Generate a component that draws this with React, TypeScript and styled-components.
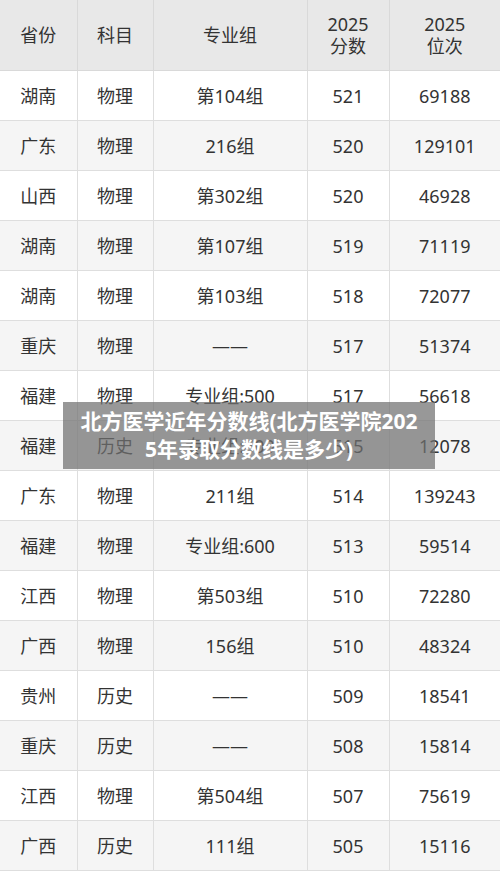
import { styled, createGlobalStyle } from "styled-components";

const GlobalStyle = createGlobalStyle`
  html, body {
    margin: 0;
    padding: 0;
    background: #fff;
  }
  body {
    font-family: "Noto Sans", "Noto Sans CJK SC", sans-serif;
  }
`;

type Row = {
  province: string;
  subject: string;
  group: string;
  score: string;
  rank: string;
};

const rows: Row[] = [
  { province: "湖南", subject: "物理", group: "第104组", score: "521", rank: "69188" },
  { province: "广东", subject: "物理", group: "216组", score: "520", rank: "129101" },
  { province: "山西", subject: "物理", group: "第302组", score: "520", rank: "46928" },
  { province: "湖南", subject: "物理", group: "第107组", score: "519", rank: "71119" },
  { province: "湖南", subject: "物理", group: "第103组", score: "518", rank: "72077" },
  { province: "重庆", subject: "物理", group: "——", score: "517", rank: "51374" },
  { province: "福建", subject: "物理", group: "专业组:500", score: "517", rank: "56618" },
  { province: "福建", subject: "历史", group: "专业组:600", score: "515", rank: "12078" },
  { province: "广东", subject: "物理", group: "211组", score: "514", rank: "139243" },
  { province: "福建", subject: "物理", group: "专业组:600", score: "513", rank: "59514" },
  { province: "江西", subject: "物理", group: "第503组", score: "510", rank: "72280" },
  { province: "广西", subject: "物理", group: "156组", score: "510", rank: "48324" },
  { province: "贵州", subject: "历史", group: "——", score: "509", rank: "18541" },
  { province: "重庆", subject: "历史", group: "——", score: "508", rank: "15814" },
  { province: "江西", subject: "物理", group: "第504组", score: "507", rank: "75619" },
  { province: "广西", subject: "历史", group: "111组", score: "505", rank: "15116" },
];

const App = () => {
  return (
    <Page>
      <GlobalStyle />
      <Table>
        <colgroup>
          <col style={{ width: 77 }} />
          <col style={{ width: 76 }} />
          <col style={{ width: 154 }} />
          <col style={{ width: 82 }} />
          <col />
        </colgroup>
        <thead>
          <tr>
            <HeadCell>省份</HeadCell>
            <HeadCell>科目</HeadCell>
            <HeadCell>专业组</HeadCell>
            <HeadCell>
              2025
              <br />
              分数
            </HeadCell>
            <HeadCell>
              2025
              <br />
              位次
            </HeadCell>
          </tr>
        </thead>
        <tbody>
          {rows.map((r, i) => (
            <BodyRow key={i} $striped={i % 2 === 1}>
              <Cell>{r.province}</Cell>
              <Cell>{r.subject}</Cell>
              <Cell>{r.group}</Cell>
              <Cell>{r.score}</Cell>
              <Cell>{r.rank}</Cell>
            </BodyRow>
          ))}
        </tbody>
      </Table>
      <Caption>
        北方医学近年分数线(北方医学院202
        <br />
        5年录取分数线是多少)
      </Caption>
    </Page>
  );
};

export default App;

const Page = styled.div`
  position: relative;
  width: 500px;
  height: 872px;
  overflow: hidden;
  background: #fff;
`;

const Table = styled.table`
  width: 500px;
  border-collapse: collapse;
  table-layout: fixed;
  color: #333;
  font-size: 18px;
`;

const HeadCell = styled.th`
  height: 70px;
  padding: 0;
  background: #e8e8e8;
  border: 1px solid #d9d9d9;
  border-top: none;
  font-weight: 400;
  line-height: 22px;
  text-align: center;
  vertical-align: middle;
  &:first-child {
    border-left: none;
  }
  &:last-child {
    border-right: none;
  }
`;

const BodyRow = styled.tr<{ $striped: boolean }>`
  background: ${(p) => (p.$striped ? "#f5f5f5" : "#fff")};
`;

const Cell = styled.td`
  height: 49px;
  padding: 0;
  border: 1px solid #dedede;
  line-height: 22px;
  text-align: center;
  vertical-align: middle;
  white-space: nowrap;
  &:first-child {
    border-left: none;
  }
  &:last-child {
    border-right: none;
  }
`;

const Caption = styled.div`
  position: absolute;
  left: 63px;
  top: 402px;
  width: 372px;
  height: 67px;
  box-sizing: border-box;
  padding-top: 5px;
  background: rgba(112, 112, 112, 0.72);
  color: #fff;
  font-family: "Noto Sans", "Noto Sans CJK SC", sans-serif;
  font-size: 21px;
  font-weight: 700;
  line-height: 28px;
  text-align: center;
  white-space: nowrap;
`;
